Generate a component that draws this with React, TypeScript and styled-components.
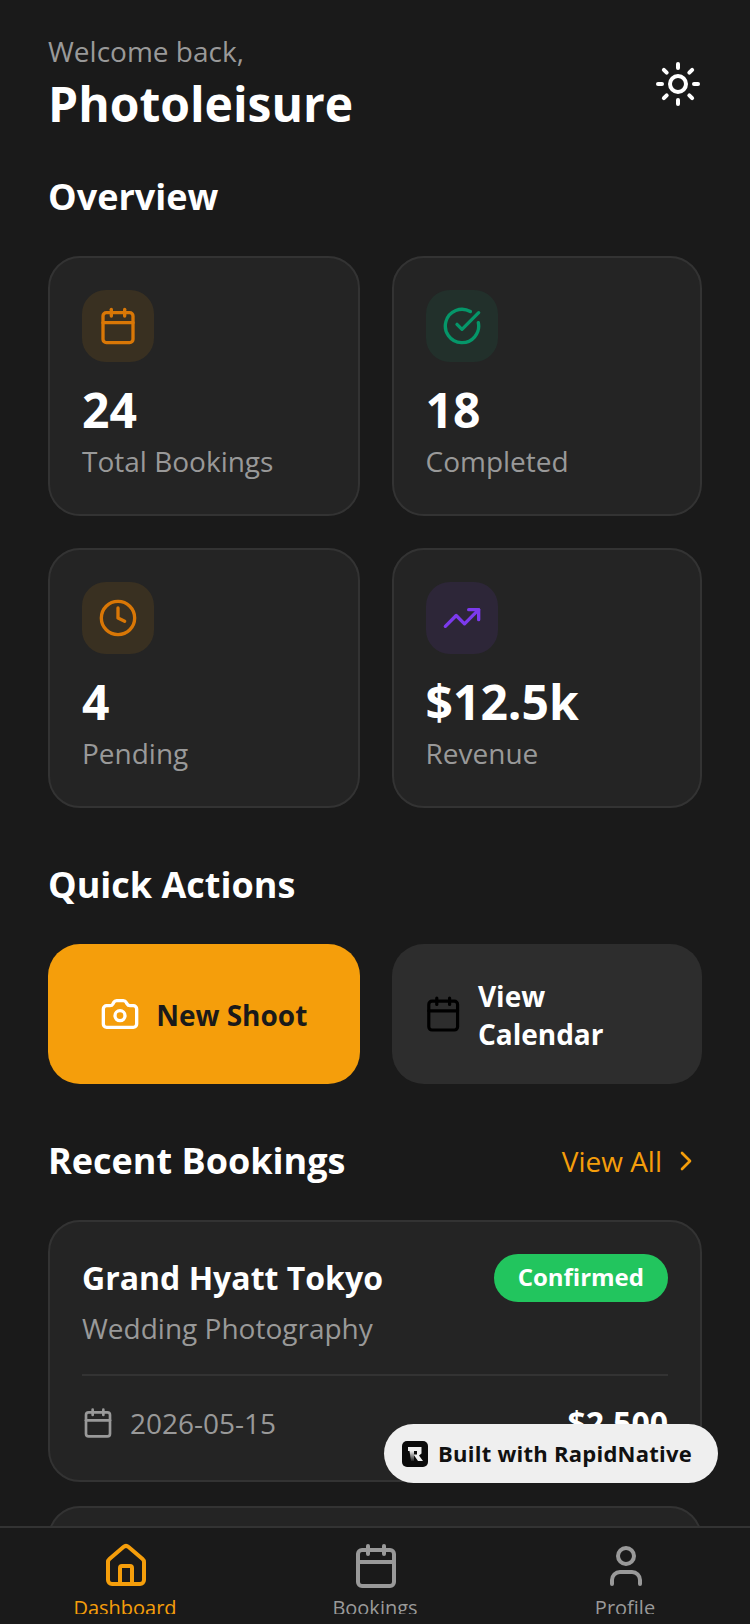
import React from 'react';
import styled, { createGlobalStyle } from 'styled-components';
import { Calendar, CircleCheckBig, Clock, TrendingUp, Camera, ChevronRight, House, User, Sun } from 'lucide-react';

const stats = [
  { label: 'Total Bookings', value: '24', color: '#d97706', tint: 'rgba(245, 158, 11, 0.1)', Icon: Calendar },
  { label: 'Completed', value: '18', color: '#059669', tint: 'rgba(16, 185, 129, 0.08)', Icon: CircleCheckBig },
  { label: 'Pending', value: '4', color: '#d97706', tint: 'rgba(245, 158, 11, 0.1)', Icon: Clock },
  { label: 'Revenue', value: '$12.5k', color: '#7c3aed', tint: 'rgba(124, 58, 237, 0.1)', Icon: TrendingUp },
];

const tabs = [
  { label: 'Dashboard', Icon: House, active: true },
  { label: 'Bookings', Icon: Calendar, active: false },
  { label: 'Profile', Icon: User, active: false },
];

const App: React.FC = () => {
  return (
    <Screen>
      <GlobalStyle />
      <Content>
        <Header>
          <div>
            <Welcome>Welcome back,</Welcome>
            <Title>Photoleisure</Title>
          </div>
          <ThemeToggle>
            <Sun size={48} strokeWidth={2} color="#fff" />
          </ThemeToggle>
        </Header>

        <SectionTitle>Overview</SectionTitle>
        <StatGrid>
          {stats.map(({ label, value, color, tint, Icon }) => (
            <StatCard key={label}>
              <IconBox $tint={tint}>
                <Icon size={40} color={color} strokeWidth={2} />
              </IconBox>
              <StatValue>{value}</StatValue>
              <StatLabel>{label}</StatLabel>
            </StatCard>
          ))}
        </StatGrid>

        <QuickTitle>Quick Actions</QuickTitle>
        <Actions>
          <ActionButton $primary>
            <Camera size={40} color="#fff" strokeWidth={2} />
            <ActionText $primary>New Shoot</ActionText>
          </ActionButton>
          <ActionButton>
            <Calendar size={40} color="#000" strokeWidth={2} />
            <ActionText>View Calendar</ActionText>
          </ActionButton>
        </Actions>

        <RecentHeader>
          <RecentTitle>Recent Bookings</RecentTitle>
          <ViewAll>
            View All
            <ChevronRight size={32} color="#f59e0b" strokeWidth={2} />
          </ViewAll>
        </RecentHeader>

        <BookingCard>
          <BookingTop>
            <div>
              <BookingName>Grand Hyatt Tokyo</BookingName>
              <BookingType>Wedding Photography</BookingType>
            </div>
            <StatusBadge>Confirmed</StatusBadge>
          </BookingTop>
          <BookingBottom>
            <BookingDate>
              <Calendar size={32} color="#999" strokeWidth={2} />
              2026-05-15
            </BookingDate>
            <BookingPrice>$2,500</BookingPrice>
          </BookingBottom>
        </BookingCard>
        <BookingCard />
      </Content>

      <TabBar>
        {tabs.map(({ label, Icon, active }) => (
          <Tab key={label}>
            <Icon size={48} color={active ? '#f59e0b' : '#999'} strokeWidth={2} />
            <TabLabel $active={active}>{label}</TabLabel>
          </Tab>
        ))}
      </TabBar>

      <BuiltWith>
        <svg width="26" height="26" viewBox="0 0 26 26">
          <defs>
            <linearGradient id="stemFade" x1="0" y1="0" x2="0" y2="1">
              <stop offset="0" stopColor="#f0f0f0" />
              <stop offset="1" stopColor="#222" />
            </linearGradient>
          </defs>
          <rect width="26" height="26" rx="5" fill="#0b0b0b" />
          <path d="M6 6h13.500v6.500L17 14.500l4 5.500h-5l-4.500-6.500H15V10H6z" fill="#f0f0f0" />
          <path d="M7.500 10H12v10H9z" fill="url(#stemFade)" />
        </svg>
        <BuiltText>Built with RapidNative</BuiltText>
      </BuiltWith>
    </Screen>
  );
};

const GlobalStyle = createGlobalStyle`
  html, body {
    margin: 0;
    padding: 0;
    background: #1a1a1a;
  }

  * {
    box-sizing: border-box;
  }
`;

const Screen = styled.div`
  position: relative;
  width: 750px;
  height: 1624px;
  display: flex;
  flex-direction: column;
  overflow: hidden;
  background: #1a1a1a;
  font-family: 'Open Sans', sans-serif;
`;

const Content = styled.div`
  flex: 1;
  min-height: 0;
  overflow: hidden;
  padding: 31px 48px 0;
`;

const Header = styled.div`
  display: flex;
  justify-content: space-between;
  align-items: center;
`;

const Welcome = styled.div`
  font-size: 28px;
  line-height: 41px;
  color: #999;
`;

const Title = styled.div`
  font-size: 48px;
  line-height: 64px;
  font-weight: 700;
  color: #fff;
`;

const ThemeToggle = styled.div`
  display: flex;
`;

const SectionTitle = styled.div`
  margin-top: 37px;
  font-size: 36px;
  line-height: 48px;
  font-weight: 700;
  color: #fff;
`;

const StatGrid = styled.div`
  display: grid;
  grid-template-columns: 311.5px 310.5px;
  gap: 32px;
  margin-top: 35px;
`;

const StatCard = styled.div`
  height: 260px;
  padding: 32px;
  background: #242424;
  border: 2px solid #333;
  border-radius: 32px;
`;

const IconBox = styled.div<{ $tint: string }>`
  width: 72px;
  height: 72px;
  display: flex;
  align-items: center;
  justify-content: center;
  background: ${props => props.$tint};
  border-radius: 24px;
`;

const StatValue = styled.div`
  margin-top: 16px;
  font-size: 48px;
  line-height: 64px;
  font-weight: 700;
  color: #fff;
`;

const StatLabel = styled.div`
  margin-top: -1px;
  font-size: 28px;
  line-height: 40px;
  color: #999;
`;

const QuickTitle = styled(SectionTitle)`
  margin-top: 53px;
`;

const Actions = styled.div`
  display: grid;
  grid-template-columns: 311.5px 310.5px;
  gap: 32px;
  margin-top: 35px;
`;

const ActionButton = styled.div<{ $primary?: boolean }>`
  height: 140px;
  display: flex;
  align-items: center;
  justify-content: center;
  gap: 16px;
  padding: 0 32px;
  background: ${props => (props.$primary ? '#f59e0b' : '#2d2d2d')};
  border-radius: 32px;
`;

const ActionText = styled.div<{ $primary?: boolean }>`
  margin-top: 2px;
  font-size: 28px;
  line-height: 38px;
  font-weight: 700;
  color: ${props => (props.$primary ? '#1a1a1a' : '#fff')};
`;

const RecentHeader = styled.div`
  display: flex;
  justify-content: space-between;
  align-items: center;
  margin-top: 53px;
`;

const RecentTitle = styled.div`
  font-size: 36px;
  line-height: 48px;
  font-weight: 700;
  color: #fff;
`;

const ViewAll = styled.div`
  display: flex;
  align-items: center;
  gap: 8px;
  font-size: 28px;
  color: #f59e0b;
`;

const BookingCard = styled.div`
  min-height: 262px;
  margin-top: 35px;
  padding: 32px;
  background: #242424;
  border: 2px solid #333;
  border-radius: 32px;

  & + & {
    margin-top: 24px;
  }
`;

const BookingTop = styled.div`
  display: flex;
  justify-content: space-between;
  align-items: flex-start;
  padding-bottom: 26px;
  border-bottom: 2px solid #333;
`;

const BookingName = styled.div`
  font-size: 32px;
  line-height: 48px;
  font-weight: 700;
  color: #fff;
`;

const BookingType = styled.div`
  margin-top: 6px;
  font-size: 28px;
  line-height: 40px;
  color: #999;
`;

const StatusBadge = styled.div`
  height: 48px;
  padding: 0 24px 3px;
  display: flex;
  align-items: center;
  font-size: 24px;
  font-weight: 700;
  color: #fff;
  background: #22c55e;
  border-radius: 24px;
`;

const BookingBottom = styled.div`
  display: flex;
  justify-content: space-between;
  align-items: center;
  margin-top: 25px;
`;

const BookingDate = styled.div`
  display: flex;
  align-items: center;
  gap: 16px;
  font-size: 28px;
  color: #999;
`;

const BookingPrice = styled.div`
  font-size: 32px;
  font-weight: 700;
  color: #fff;
`;

const TabBar = styled.div`
  height: 98px;
  flex-shrink: 0;
  display: flex;
  padding-top: 14px;
  background: #1a1a1a;
  border-top: 2px solid #333;
`;

const Tab = styled.div`
  flex: 1;
  height: 72px;
  display: flex;
  flex-direction: column;
  align-items: center;
  overflow: hidden;

  svg {
    flex-shrink: 0;
    margin-left: 2px;
  }
`;

const TabLabel = styled.div<{ $active: boolean }>`
  margin-top: 4px;
  font-size: 20px;
  line-height: 28px;
  flex-shrink: 0;
  color: ${props => (props.$active ? '#f59e0b' : '#999')};
`;

const BuiltWith = styled.div`
  position: absolute;
  left: 384px;
  top: 1424px;
  width: 334px;
  height: 59px;
  display: flex;
  align-items: center;
  gap: 10px;
  padding-left: 18px;
  font-size: 22px;
  font-weight: 700;
  letter-spacing: 0.25px;
  color: #111;
  background: #efefef;
  border-radius: 30px;
`;

const BuiltText = styled.span`
  margin-bottom: 2px;
`;

export default App;
